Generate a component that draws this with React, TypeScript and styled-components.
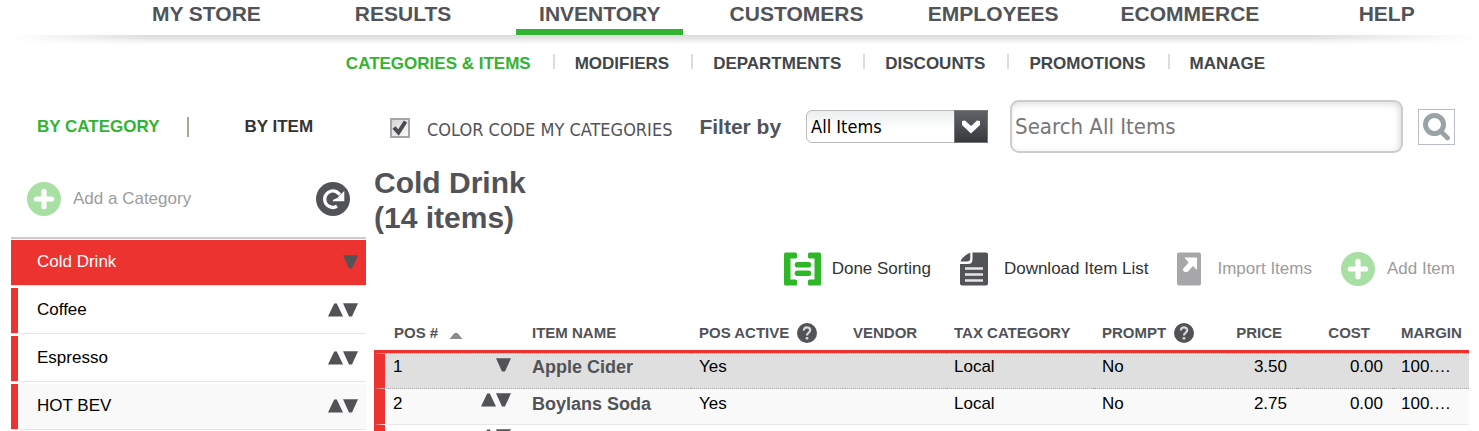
import React from "react";
import styled, { createGlobalStyle } from "styled-components";

const GREEN = "#32b432";
const RED = "#ed3330";
const SLATE = "#515357";
const TAHOMA = `Tahoma, "DejaVu Sans Condensed", "Noto Sans", sans-serif`;

const GlobalStyle = createGlobalStyle`
  * { box-sizing: border-box; }
  body {
    margin: 0;
    height: 100vh;
    overflow: hidden;
    background: #fff;
    color: #000;
    font: 17px/20px Helvetica, "Liberation Sans", Arial, sans-serif;
  }
  a { color: inherit; text-decoration: none; }
  ul { list-style: none; margin: 0; padding: 0; }
  button { border: 0; padding: 0; background: none; color: inherit; font: inherit; cursor: pointer; }
  svg { display: block; flex: none; }
`;

const Page = styled.div`
  height: 100vh;
  overflow: hidden;
`;

const Header = styled.header`
  overflow: hidden;
`;

const MainNav = styled.ul`
  display: grid;
  grid-template-columns: repeat(7, minmax(0, 1fr));
  height: 35px;
  margin: 0 -6px 0 108px;
`;

const MainTab = styled.li<{ $active?: boolean }>`
  margin: 0 15px;
  border-bottom: 6px solid ${(p) => (p.$active ? GREEN : "transparent")};
  text-align: center;
  font-size: 21px;
  font-weight: bold;
  line-height: 28px;
  color: ${SLATE};
`;

const HeaderShadow = styled.div`
  height: 10px;
  background: linear-gradient(#dcdcdc, #e2e2e2 30%, #f6f6f6 70%, #fff);
  mask-image: linear-gradient(90deg, transparent 10px, #000 150px, #000 calc(100% - 170px), transparent);
`;

const SubNav = styled.ul`
  display: flex;
  justify-content: center;
  padding-left: 132px;
  margin-top: 9px;
`;

const SubTab = styled.li<{ $active?: boolean }>`
  padding: 0 22px;
  font-weight: bold;
  color: ${(p) => (p.$active ? GREEN : "#414749")};
  background: linear-gradient(#ddd, #ddd) 0 0 / 2px 15px no-repeat;
  &:first-child { background: none; }
`;

const Columns = styled.div`
  display: grid;
  grid-template-columns: 355px minmax(0, 1fr);
  gap: 8px;
  padding: 0 10px 0 11px;
  margin-top: 26px;
`;

const ViewTabs = styled.nav`
  display: flex;
  align-items: center;
  height: 53px;
  padding-left: 26px;
  font-weight: bold;
`;

const ViewTab = styled.a<{ $active?: boolean }>`
  color: ${(p) => (p.$active ? GREEN : "#333")};
  & + & {
    margin-left: 28px;
    padding-left: 57px;
    background: linear-gradient(#a9a596, #a9a596) 0 0 / 2px 20px no-repeat;
  }
`;

const AddRow = styled.div`
  display: flex;
  align-items: center;
  justify-content: space-between;
  height: 86px;
  padding: 8px 16px 0;
  border-bottom: 2px solid #ccc;
`;

const ActionButton = styled.button<{ $disabled?: boolean; $gap?: number }>`
  display: flex;
  align-items: center;
  gap: ${(p) => p.$gap ?? 12}px;
  white-space: nowrap;
  color: ${(p) => (p.$disabled ? "#9c9c9c" : "#333")};
`;

const CategoryList = styled.ul`
  padding-top: 1px;
`;

const CategoryRow = styled.li<{ $active?: boolean; $shaded?: boolean }>`
  display: flex;
  align-items: center;
  justify-content: space-between;
  height: 46px;
  margin-bottom: 2px;
  padding: 0 8px 1px 26px;
  border-bottom: 1px solid #e6e6e6;
  color: ${(p) => (p.$active ? "#fff" : "#000")};
  background: linear-gradient(${RED}, ${RED}) 0 0 / ${(p) => (p.$active ? "100%" : "7px")} 45px no-repeat
    ${(p) => (p.$shaded ? "#f9f9f9" : "#fff")};
`;

const Movers = styled.span`
  display: flex;
  justify-content: flex-end;
`;

const FilterBar = styled.form`
  display: flex;
  align-items: center;
  height: 53px;
  padding: 0 14px 0 16px;
`;

const CheckLabel = styled.label`
  display: flex;
  align-items: flex-start;
  gap: 17px;
  padding-top: 6px;
  white-space: nowrap;
  font-family: ${TAHOMA};
  font-size: 18px;
  line-height: 24px;
  color: ${SLATE};
`;

const CheckBox = styled.span`
  display: grid;
  flex: none;
  width: 20px;
  height: 20px;
  & > * { grid-area: 1 / 1; }
  & > svg { visibility: hidden; pointer-events: none; }
  & > input:checked + svg { visibility: visible; }
`;

const CheckInput = styled.input`
  appearance: none;
  width: 20px;
  height: 20px;
  margin: 0;
  border: 2px solid #a3a5a8;
  background: linear-gradient(135deg, #d6d6d6, #f8f8f8);
`;

const FilterLabel = styled.label`
  margin: 0 25px 0 27px;
  white-space: nowrap;
  font-size: 21px;
  font-weight: bold;
  color: ${SLATE};
`;

const SelectBox = styled.span`
  display: grid;
  flex: none;
  width: 182px;
  height: 33px;
  & > * { grid-area: 1 / 1; }
`;

const FilterSelect = styled.select`
  appearance: none;
  width: 100%;
  height: 100%;
  padding: 0 36px 0 4px;
  border: 1px solid #bbb;
  border-radius: 6px 2px 2px 6px;
  background: linear-gradient(#eceeef, #fff 60%);
  font-family: ${TAHOMA};
  font-size: 18px;
  color: #000;
`;

const SelectArrow = styled.span`
  display: grid;
  place-items: center;
  justify-self: end;
  width: 34px;
  height: 33px;
  border: 1px solid #74777a;
  background: linear-gradient(#606368, #37393d);
  pointer-events: none;
`;

const SearchInput = styled.input`
  flex: 1;
  min-width: 0;
  height: 53px;
  margin: 0 15px 0 22px;
  padding: 0 3px;
  border: 2px solid #ccc;
  border-radius: 9px;
  box-shadow: inset -2px 2px 6px #ddd;
  font-family: ${TAHOMA};
  font-size: 22px;
  &::placeholder { color: #777; opacity: 1; }
`;

const SearchButton = styled.button`
  display: grid;
  place-items: center;
  flex: none;
  width: 37px;
  height: 36px;
  && { border: 1px solid #b9bcc9; }
`;

const Title = styled.h1`
  width: 200px;
  margin: 12px 0 0;
  font-size: 30px;
  line-height: 35px;
  color: ${SLATE};
`;

const Actions = styled.div`
  display: flex;
  align-items: center;
  justify-content: flex-end;
  gap: 29px;
  height: 34px;
  margin-top: 17px;
  padding-right: 14px;
`;

const ItemTable = styled.table`
  width: 100%;
  margin-top: 26px;
  table-layout: fixed;
  border-collapse: separate;
  border-spacing: 0;
`;

const HeadCell = styled.th<{ $right?: number }>`
  height: 41px;
  padding: 3px ${(p) => p.$right ?? 0}px 0 ${(p) => (p.$right ? 0 : 8)}px;
  border-bottom: 3px solid ${RED};
  text-align: ${(p) => (p.$right ? "right" : "left")};
  white-space: nowrap;
  font-size: 15px;
  line-height: 20px;
  color: ${SLATE};
  &:first-child { padding-left: 20px; }
`;

const HeadContent = styled.span`
  display: flex;
  align-items: center;
  gap: 8px;
`;

const ItemRow = styled.tr<{ $selected?: boolean; $shaded?: boolean }>`
  background: ${(p) => (p.$selected ? "#dfdfdf" : p.$shaded ? "#f9f9f9" : "#fff")};
  & > td {
    height: 36px;
    padding: ${(p) => (p.$selected ? 3 : 5)}px 8px 3px;
    vertical-align: top;
    white-space: nowrap;
    border-bottom: 1px ${(p) => (p.$selected ? "dotted #aaa" : "solid #e8e8e8")};
    ${(p) => p.$selected && "border-top: 1px dotted #aaa;"}
  }
  & > td:first-child { border-left: 11px solid ${RED}; }
`;

const MoverCell = styled.td`
  && { padding-right: 13px; padding-top: 4px; }
`;

const NameCell = styled.td`
  font-size: 18px;
  font-weight: bold;
  color: ${SLATE};
`;

const NumberCell = styled.td`
  && { padding-right: 10px; }
  text-align: right;
`;

const Up = () => (
  <svg width="15" height="14" viewBox="0 0 15 14">
    <path d="M6.2 0.4h2.6L15 13.6H0z" fill={SLATE} />
  </svg>
);

const Down = () => (
  <svg width="15" height="14" viewBox="0 0 15 14">
    <path d="M0 0.2h15L9 13.4H6z" fill={SLATE} />
  </svg>
);

const MoveButtons = ({ name, first }: { name: string; first?: boolean }) => (
  <Movers>
    {!first && <button aria-label={`Move ${name} up`}><Up /></button>}
    <button aria-label={`Move ${name} down`}><Down /></button>
  </Movers>
);

const PlusIcon = () => (
  <svg width="34" height="34" viewBox="0 0 34 34">
    <circle cx="17" cy="17" r="17" fill="#a8dfa2" />
    <path d="M17 9.3v15.4M9.3 17h15.4" stroke="#fff" strokeWidth="5.2" strokeLinecap="round" />
  </svg>
);

const RefreshIcon = () => (
  <svg width="34" height="34" viewBox="0 0 34 34">
    <circle cx="17" cy="17" r="17" fill={SLATE} />
    <path d="M21 24.300a8.200 8.200 0 1 1-.5-14.500l3.500 2.700" fill="none" stroke="#fff" strokeWidth="3.400" />
    <path d="M28.300 9v10.200H16.800q-.3-1.500 1.600-1.900 3.500-.6 4.600-3.300z" fill="#fff" />
  </svg>
);

const SortIcon = () => (
  <svg width="37" height="34" viewBox="0 0 37 34">
    <path
      d="M1.500 0.500h10q1.500 0 1.500 1.500v3q0 1.500-1.500 1.500H6.500v21h5q1.500 0 1.500 1.500v3q0 1.500-1.500 1.500h-10q-1.500 0-1.500-1.500V2q0-1.500 1.500-1.500zM35.500 0.500h-10Q24 .5 24 2v3q0 1.500 1.500 1.500h5v21h-5Q24 27.500 24 29v3q0 1.500 1.500 1.500h10q1.500 0 1.500-1.500V2q0-1.500-1.500-1.500z"
      fill="#2fb728"
    />
    <path d="M13.500 12.800h11M13.500 21.300h11" stroke="#2fb728" strokeWidth="5.600" strokeLinecap="round" />
  </svg>
);

const DocumentIcon = () => (
  <svg width="28" height="34" viewBox="0 0 28 34">
    <path d="M12.500.5H26q2 0 2 2v29q0 2-2 2H2q-2 0-2-2V12h8q4.500 0 4.500-4.500z" fill={SLATE} />
    <path d="M.5 9.500Q1 7 4.500 4.300 8 1 10.300.8v5.400q0 3.300-3.300 3.300z" fill={SLATE} />
    <path d="M5 16.500h18M5 22.500h18M5 28.500h18" stroke="#e6e6e6" strokeWidth="2.400" />
  </svg>
);

const ImportIcon = () => (
  <svg width="24" height="34" viewBox="0 0 24 34">
    <rect y="0.500" width="24" height="33" rx="2" fill="#a7a7a9" />
    <path d="M7.500 5.500H20v12.500l-4-4-5 5.500q-3 1.500-5-1 0-2 1-3l4.700-4.700z" fill="#fff" />
  </svg>
);

const HelpIcon = () => (
  <svg width="20" height="20" viewBox="0 0 20 20">
    <circle cx="10" cy="10" r="10" fill={SLATE} />
    <path d="M6.800 7.500Q7 4.300 10 4.300t3.200 2.800q0 1.500-1.700 2.700Q10 10.800 10 12.500" fill="none" stroke="#d8d8d8" strokeWidth="2.200" />
    <circle cx="10" cy="15.300" r="1.400" fill="#d8d8d8" />
  </svg>
);

const mainTabs = ["MY STORE", "RESULTS", "INVENTORY", "CUSTOMERS", "EMPLOYEES", "ECOMMERCE", "HELP"];
const subTabs = ["CATEGORIES & ITEMS", "MODIFIERS", "DEPARTMENTS", "DISCOUNTS", "PROMOTIONS", "MANAGE"];
const categories = ["Cold Drink", "Coffee", "Espresso", "HOT BEV"];
const columnWidths = [95, 55, 167, 154, 101, 148, 134, 69, 96, 76];
const items = [
  { pos: 1, name: "Apple Cider", active: "Yes", tax: "Local", prompt: "No", price: "3.50", cost: "0.00", margin: "100.…" },
  { pos: 2, name: "Boylans Soda", active: "Yes", tax: "Local", prompt: "No", price: "2.75", cost: "0.00", margin: "100.…" },
];

export default function App() {
  return (
    <Page>
      <GlobalStyle />
      <Header>
        <nav>
          <MainNav>
            {mainTabs.map((t) => (
              <MainTab key={t} $active={t === "INVENTORY"}><a href="#">{t}</a></MainTab>
            ))}
          </MainNav>
        </nav>
        <HeaderShadow />
        <nav>
          <SubNav>
            {subTabs.map((t, i) => (
              <SubTab key={t} $active={i === 0}><a href="#">{t}</a></SubTab>
            ))}
          </SubNav>
        </nav>
      </Header>
      <Columns>
        <aside>
          <ViewTabs>
            <ViewTab href="#" $active>BY CATEGORY</ViewTab>
            <ViewTab href="#">BY ITEM</ViewTab>
          </ViewTabs>
          <AddRow>
            <ActionButton $disabled><PlusIcon />Add a Category</ActionButton>
            <button aria-label="Refresh"><RefreshIcon /></button>
          </AddRow>
          <CategoryList>
            {categories.map((c, i) => (
              <CategoryRow key={c} $active={i === 0} $shaded={i === 3}>
                {c}
                <MoveButtons name={c} first={i === 0} />
              </CategoryRow>
            ))}
          </CategoryList>
        </aside>
        <main>
          <FilterBar onSubmit={(e) => e.preventDefault()}>
            <CheckLabel>
              <CheckBox>
                <CheckInput type="checkbox" defaultChecked />
                <svg width="20" height="20" viewBox="0 0 20 20">
                  <path d="M4 9.500l4.500 5L15.500 3.500" fill="none" stroke="#4a4c50" strokeWidth="4" />
                </svg>
              </CheckBox>
              COLOR CODE MY CATEGORIES
            </CheckLabel>
            <FilterLabel htmlFor="filter">Filter by</FilterLabel>
            <SelectBox>
              <FilterSelect id="filter"><option>All Items</option></FilterSelect>
              <SelectArrow>
                <svg width="20" height="14" viewBox="0 0 20 14">
                  <path d="M1 1l3-.5 6 5.500L16 .5l3 .5v4L10 13.500 1 5z" fill="#fff" />
                </svg>
              </SelectArrow>
            </SelectBox>
            <SearchInput type="text" placeholder="Search All Items" aria-label="Search All Items" />
            <SearchButton type="submit" aria-label="Search">
              <svg width="29" height="28" viewBox="0 0 29 28">
                <circle cx="12.500" cy="11.500" r="9" fill="none" stroke="#9aa3a5" strokeWidth="5" />
                <path d="M19.500 19l6 6" stroke="#9aa3a5" strokeWidth="4.600" strokeLinecap="round" />
              </svg>
            </SearchButton>
          </FilterBar>
          <Title>Cold Drink (14&nbsp;items)</Title>
          <Actions>
            <ActionButton $gap={11}><SortIcon />Done Sorting</ActionButton>
            <ActionButton $gap={16}><DocumentIcon />Download Item List</ActionButton>
            <ActionButton $gap={16} $disabled><ImportIcon />Import Items</ActionButton>
            <ActionButton $disabled><PlusIcon />Add Item</ActionButton>
          </Actions>
          <ItemTable>
            <colgroup>
              {columnWidths.map((w, i) => <col key={i} width={w} />)}
            </colgroup>
            <thead>
              <tr>
                <HeadCell colSpan={2}>
                  <HeadContent>
                    POS #
                    <svg width="20" height="20" viewBox="0 0 20 20">
                      <path d="M8.500 10h3l5 6h-13z" fill="#8c8c8c" />
                    </svg>
                  </HeadContent>
                </HeadCell>
                <HeadCell>ITEM NAME</HeadCell>
                <HeadCell><HeadContent>POS ACTIVE<HelpIcon /></HeadContent></HeadCell>
                <HeadCell>VENDOR</HeadCell>
                <HeadCell>TAX CATEGORY</HeadCell>
                <HeadCell><HeadContent>PROMPT<HelpIcon /></HeadContent></HeadCell>
                <HeadCell $right={15}>PRICE</HeadCell>
                <HeadCell $right={23}>COST</HeadCell>
                <HeadCell>MARGIN</HeadCell>
              </tr>
            </thead>
            <tbody>
              {items.map((it, i) => (
                <ItemRow key={it.pos} $selected={i === 0} $shaded={i === 1}>
                  <td>{it.pos}</td>
                  <MoverCell><MoveButtons name={it.name} first={i === 0} /></MoverCell>
                  <NameCell>{it.name}</NameCell>
                  <td>{it.active}</td>
                  <td />
                  <td>{it.tax}</td>
                  <td>{it.prompt}</td>
                  <NumberCell>{it.price}</NumberCell>
                  <NumberCell>{it.cost}</NumberCell>
                  <td>{it.margin}</td>
                </ItemRow>
              ))}
              <ItemRow>
                <td />
                <MoverCell><MoveButtons name="item" /></MoverCell>
                <td colSpan={8} />
              </ItemRow>
            </tbody>
          </ItemTable>
        </main>
      </Columns>
    </Page>
  );
}
